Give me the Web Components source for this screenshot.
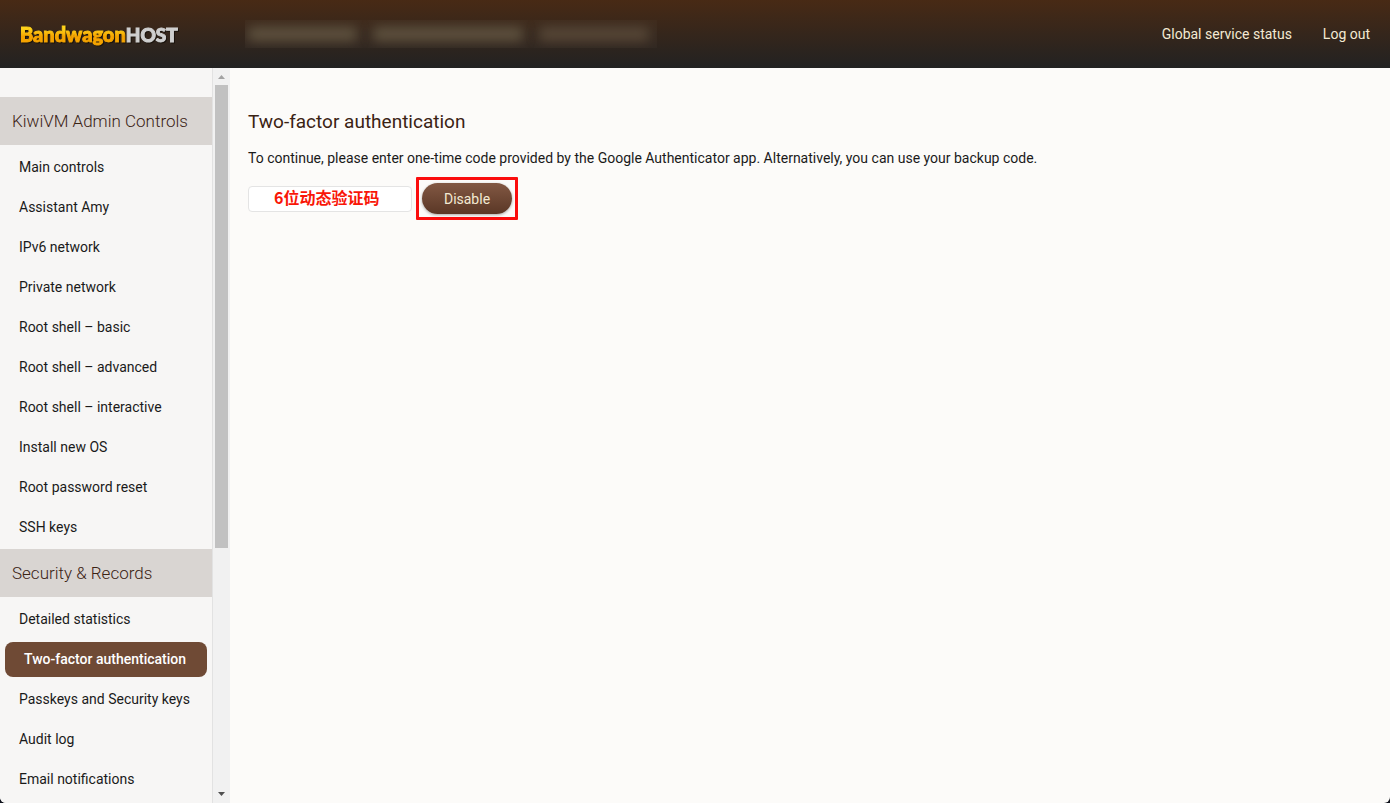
<!DOCTYPE html>
<html lang="en">
<head>
<meta charset="utf-8">
<title>KiwiVM – Two-factor authentication</title>
<style>
  html, body { height: 100%; }
  body {
    margin: 0;
    background: #10131c;
    color: #1a1a1a;
    font: 14px/20px Roboto, "Liberation Sans", "Noto Sans CJK SC", sans-serif;
  }
</style>
</head>
<body>
<kiwi-app>
  <kiwi-header slot="header">
    <header-link href="#status">Global service status</header-link>
    <header-link href="#logout">Log out</header-link>
  </kiwi-header>
  <kiwi-sidebar slot="sidebar">
    <menu-group heading="KiwiVM Admin Controls">
      <menu-item>Main controls</menu-item>
      <menu-item>Assistant Amy</menu-item>
      <menu-item>IPv6 network</menu-item>
      <menu-item>Private network</menu-item>
      <menu-item>Root shell – basic</menu-item>
      <menu-item>Root shell – advanced</menu-item>
      <menu-item>Root shell – interactive</menu-item>
      <menu-item>Install new OS</menu-item>
      <menu-item>Root password reset</menu-item>
      <menu-item>SSH keys</menu-item>
    </menu-group>
    <menu-group heading="Security &amp; Records">
      <menu-item>Detailed statistics</menu-item>
      <menu-item active>Two-factor authentication</menu-item>
      <menu-item>Passkeys and Security keys</menu-item>
      <menu-item>Audit log</menu-item>
      <menu-item>Email notifications</menu-item>
    </menu-group>
  </kiwi-sidebar>
  <two-factor-form></two-factor-form>
</kiwi-app>

<script>
function define(name, html) {
  const template = document.createElement('template');
  template.innerHTML = html;
  customElements.define(name, class extends HTMLElement {
    constructor() {
      super();
      this.attachShadow({ mode: 'open' }).append(template.content.cloneNode(true));
    }
    connectedCallback() {
      const root = this.shadowRoot;
      const heading = root.querySelector('[data-heading]');
      if (heading) heading.textContent = this.getAttribute('heading');
      const link = root.querySelector('a[data-link]');
      if (link) {
        link.href = this.getAttribute('href') || '#';
        if (this.hasAttribute('active')) link.setAttribute('aria-current', 'page');
      }
    }
  });
}

define('kiwi-app', `
  <style>
    :host {
      display: grid;
      grid-template: auto minmax(0, 1fr) / auto minmax(0, 1fr);
      height: 100vh;
      overflow: hidden;
      background: #fcfbf9;
      border-radius: 0 0 6px 6px;
    }
    ::slotted([slot=header]) { grid-column: 1 / -1; }
    main { padding: 40px 18px; }
  </style>
  <slot name="header"></slot>
  <slot name="sidebar"></slot>
  <main><slot></slot></main>
`);

define('kiwi-logo', `
  <style>
    :host { display: block; width: 225px; }
    a {
      display: flex;
      align-items: baseline;
      font: 900 20px/24px Lato, sans-serif;
      text-decoration: none;
      filter: drop-shadow(1px 1px 0 #1a130c);
    }
    span {
      background: linear-gradient(#ffd21a 30%, #f5a300 60%);
      background-clip: text;
      color: transparent;
      -webkit-text-stroke: 1px transparent;
    }
    b { font-size: 19px; font-weight: 900; color: #cfcfcf; -webkit-text-stroke: 1px #cfcfcf; }
  </style>
  <a href="#home" aria-label="BandwagonHOST"><span>Bandwagon</span><b>HOST</b></a>
`);

define('redacted-title', `
  <style>
    :host { display: flex; align-items: center; gap: 16px; height: 28px; overflow: hidden; background: #ffffff05; padding: 0 8px 0 3px; }
    i { height: 14px; border-radius: 4px; background: #5f523f; filter: blur(6px); }
    .host { width: 109px; }
    .plan { width: 150px; }
    .address { width: 110px; background: #574737; }
  </style>
  <i class="host"></i><i class="plan"></i><i class="address"></i>
`);

define('kiwi-header', `
  <style>
    :host {
      display: flex;
      align-items: center;
      height: 68px;
      padding: 0 20px;
      box-sizing: border-box;
      background: linear-gradient(#482a15, #222);
    }
    nav { display: flex; gap: 31px; margin-left: auto; }
  </style>
  <kiwi-logo></kiwi-logo>
  <redacted-title></redacted-title>
  <nav><slot></slot></nav>
`);

define('header-link', `
  <style>
    :host { display: block; }
    a { color: #f3e9d2; text-decoration: none; }
  </style>
  <a data-link href="#"><slot></slot></a>
`);

define('kiwi-sidebar', `
  <style>
    :host { display: flex; min-height: 0; background: #f7f6f5; }
    nav { width: 212px; padding-top: 29px; box-sizing: border-box; overflow: hidden; }
    scroll-rail { flex: none; }
  </style>
  <nav aria-label="Controls"><slot></slot></nav>
  <scroll-rail></scroll-rail>
`);

define('scroll-rail', `
  <style>
    :host {
      display: flex;
      flex-direction: column;
      width: 18px;
      box-sizing: border-box;
      border-left: 1px solid #e2e2e2;
      background: #f1f1f1;
    }
    svg { display: block; width: 17px; height: 17px; flex: none; }
    .track { flex: 1; padding: 0 2px; }
    .thumb { width: 13px; height: 66%; background: #c1c1c1; }
  </style>
  <svg viewBox="0 0 17 17" aria-hidden="true"><path d="M5 11h7L8.5 7z" fill="#a3a3a3"/></svg>
  <div class="track"><div class="thumb"></div></div>
  <svg viewBox="0 0 17 17" aria-hidden="true"><path d="M5 6h7L8.5 10z" fill="#505050"/></svg>
`);

define('menu-group', `
  <style>
    :host { display: block; margin-bottom: 2px; }
    h2 {
      margin: 0 0 2px;
      padding: 0 12px;
      background: #d9d5d2;
      color: #3b2314;
      font-size: 17px;
      font-weight: 300;
      line-height: 48px;
      white-space: nowrap;
    }
  </style>
  <h2 data-heading></h2>
  <slot></slot>
`);

define('menu-item', `
  <style>
    :host { display: block; padding: 3px 5px 2px; }
    a {
      display: block;
      padding: 0 14px;
      border-radius: 8px;
      color: #1a1a1a;
      line-height: 35px;
      text-decoration: none;
      white-space: nowrap;
    }
    :host([active]) a { padding: 0 19px; background: #6f4a35; color: #fff; font-weight: 500; }
  </style>
  <a data-link href="#"><slot></slot></a>
`);

define('two-factor-form', `
  <style>
    :host { display: block; }
    h1 { margin: 0 0 12px; color: #3b2314; font-size: 19px; font-weight: 400; line-height: 28px; }
    p { margin: 0 0 9px; }
    form { display: flex; align-items: center; gap: 4px; }
    input {
      width: 164px;
      height: 26px;
      box-sizing: border-box;
      padding: 0 25px 4px;
      border: 1px solid #e4e4e4;
      border-radius: 4px;
      background: #fff;
      color: #f91607;
      font: 700 16px/20px "Noto Sans CJK SC", sans-serif;
    }
    .highlight { display: flex; padding: 3px; border: 3px solid #fb0d0d; border-radius: 1px; }
    button {
      width: 90px;
      height: 31px;
      padding: 0;
      border: 0;
      border-radius: 16px;
      background: linear-gradient(#825843, #5a3726);
      box-shadow: 0 1px 3px #0005;
      color: #f3e9d2;
      font: inherit;
    }
  </style>
  <h1>Two-factor authentication</h1>
  <p id="hint">To continue, please enter one-time code provided by the Google Authenticator app. Alternatively, you can use your backup code.</p>
  <form>
    <input type="text" aria-labelledby="hint" autocomplete="one-time-code" value="6位动态验证码">
    <span class="highlight"><button type="button">Disable</button></span>
  </form>
`);
</script>
</body>
</html>
